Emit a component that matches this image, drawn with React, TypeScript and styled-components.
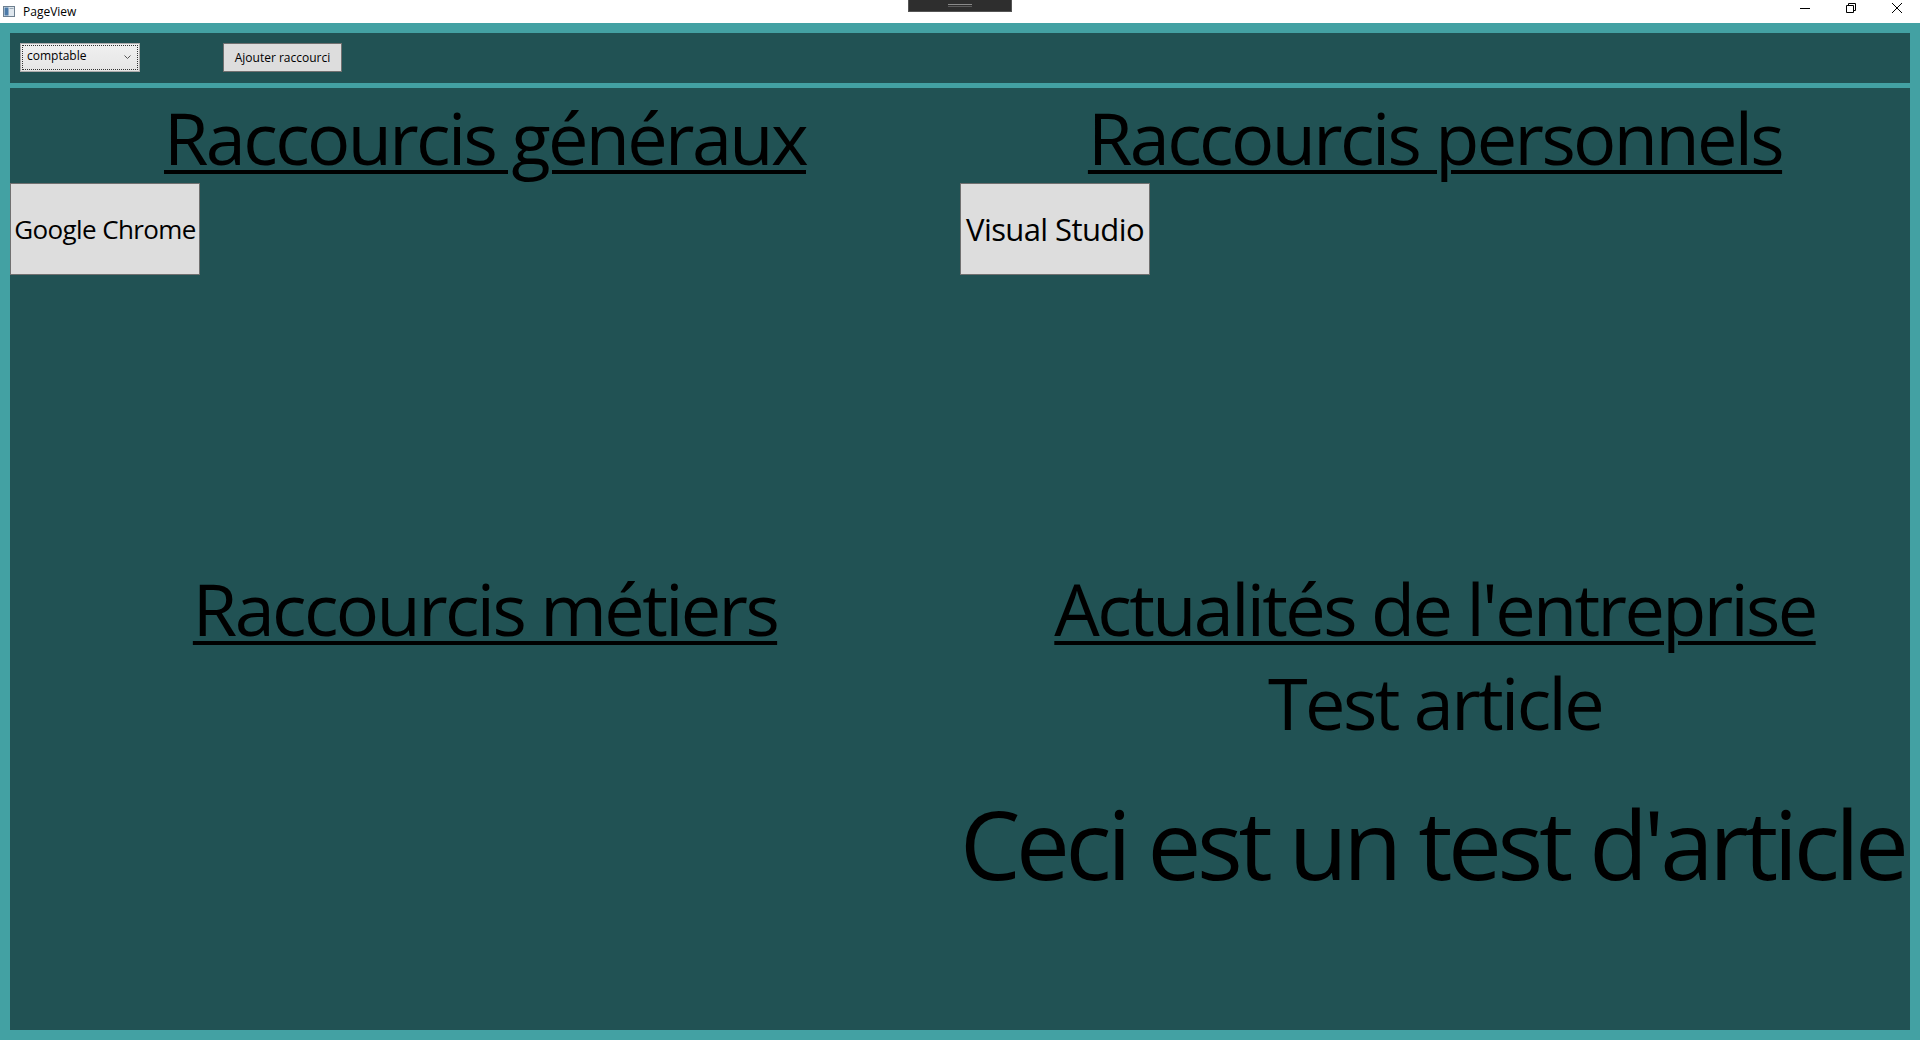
import React, { FC, ReactNode } from "react";
import styled, { createGlobalStyle } from "styled-components";

const colors = {
    frame: "#43a1a3",
    panel: "#215254",
    control: "#dddddd",
    controlBorder: "#707070",
    text: "#000000",
};

const font = `"Open Sans", "Noto Sans", "Liberation Sans", sans-serif`;

const GlobalStyle = createGlobalStyle`
	html, body {
		margin: 0;
		padding: 0;
		background: #ffffff;
	}
	body {
		font-family: ${font};
		overflow: hidden;
	}
`;

const Window = styled.div`
	width: 1920px;
	height: 1040px;
	display: flex;
	flex-direction: column;
`;

const TitleBar = styled.div`
	position: relative;
	height: 23px;
	flex: none;
	display: flex;
	align-items: center;
	background: #ffffff;
	padding-left: 3px;
	font-size: 12px;
	color: #000;
`;

const TitleText = styled.span`
	margin-left: 8px;
	margin-top: -1px;
`;

const Caption = styled.div`
	margin-left: auto;
	display: flex;
	height: 100%;
`;

const CaptionButton = styled.div`
	width: 46px;
	height: 100%;
	display: flex;
	align-items: center;
	justify-content: center;
	margin-top: -4px;
`;

/* petite poignée au centre de la barre de titre */
const Grip = styled.div`
	position: absolute;
	left: 908px;
	top: 0;
	width: 102px;
	height: 11px;
	background: #2e2e2e;
	border: 1px solid #555;
	border-top: none;
	display: flex;
	align-items: center;
	justify-content: center;

	&::after {
		content: "";
		width: 24px;
		height: 1px;
		border-top: 1px solid #8a8a8a;
		border-bottom: 1px solid #5a5a5a;
	}
`;

const Frame = styled.div`
	flex: 1;
	background: ${colors.frame};
	padding: 10px;
	display: flex;
	flex-direction: column;
	gap: 5px;
`;

const Toolbar = styled.div`
	height: 50px;
	flex: none;
	background: ${colors.panel};
	display: flex;
	align-items: flex-start;
	padding: 10px;
	box-sizing: border-box;
	gap: 83px;
`;

const Combo = styled.div`
	width: 120px;
	height: 29px;
	box-sizing: border-box;
	border: 1px solid #acacac;
	background: linear-gradient(#f0f0f0, #e5e5e5);
	padding: 1px;
`;

const ComboInner = styled.div`
	height: 100%;
	box-sizing: border-box;
	border: 1px dotted #333;
	display: flex;
	align-items: flex-start;
	justify-content: space-between;
	padding: 1px 6px 0 4px;
	font-size: 12px;
	color: #000;
`;

const Chevron = styled.span`
	margin-top: 8px;
	display: flex;
`;

const SmallButton = styled.button`
	width: 119px;
	height: 29px;
	margin: 0;
	padding: 0;
	background: ${colors.control};
	border: 1px solid ${colors.controlBorder};
	font-family: ${font};
	font-size: 12px;
	color: #000;
`;

const Board = styled.div`
	flex: 1;
	background: ${colors.panel};
	display: grid;
	grid-template-columns: 1fr 1fr;
	grid-template-rows: 1fr 1fr;
	overflow: hidden;
`;

const Section = styled.section`
	display: flex;
	flex-direction: column;
	min-width: 0;
	overflow: hidden;
`;

const Heading = styled.h2`
	margin: 0 0 -3px;
	font-size: 72px;
	font-weight: 400;
	line-height: 98px;
	flex: none;
	text-align: center;
	white-space: nowrap;
	color: ${colors.text};
	text-decoration: underline;
	text-decoration-thickness: 4px;
	text-underline-offset: 5px;
	letter-spacing: -2.6px;
`;

const Shortcuts = styled.div`
	display: flex;
	flex-wrap: wrap;
`;

const Shortcut = styled.button<{ $size: number }>`
	width: 190px;
	height: 92px;
	margin: 0;
	padding: 0;
	background: ${colors.control};
	border: 1px solid ${colors.controlBorder};
	font-family: ${font};
	font-size: ${(props) => props.$size}px;
	letter-spacing: -0.6px;
	color: #000;
	white-space: nowrap;
`;

const ArticleTitle = styled.div`
	font-size: 72px;
	line-height: 98px;
	margin: -1px 0;
	text-align: center;
	white-space: nowrap;
	letter-spacing: -2.6px;
	color: ${colors.text};
`;

const ArticleBody = styled.div`
	margin-top: 27px;
	font-size: 96px;
	line-height: 131px;
	margin-bottom: -3px;
	white-space: nowrap;
	letter-spacing: -4.4px;
	color: ${colors.text};
`;

const AppIcon: FC = () => (
    <svg width="12" height="11" viewBox="0 0 12 11">
        <rect x="0.5" y="0.5" width="11" height="10" fill="#dfe7ee" stroke="#6d7f8f" />
        <rect x="1.5" y="1.5" width="4" height="8" fill="#4c7aa8" />
        <rect x="6.5" y="2" width="4" height="1" fill="#9aa9b6" />
    </svg>
);

const Block: FC<{ title: string; children?: ReactNode }> = ({ title, children }) => (
    <Section>
        <Heading>{title}</Heading>
        {children}
    </Section>
);

const App: FC = () => {
    return (
        <Window>
            <GlobalStyle />
            <TitleBar>
                <AppIcon />
                <TitleText>PageView</TitleText>
                <Grip />
                <Caption>
                    <CaptionButton>
                        <svg width="10" height="10" viewBox="0 0 10 10">
                            <path d="M0 5.5h10" stroke="#000" strokeWidth="1" />
                        </svg>
                    </CaptionButton>
                    <CaptionButton>
                        <svg width="10" height="10" viewBox="0 0 10 10">
                            <path d="M0.5 2.5h7v7h-7z M2.5 2.5v-2h7v7h-2" stroke="#000" strokeWidth="1" fill="none" />
                        </svg>
                    </CaptionButton>
                    <CaptionButton>
                        <svg width="10" height="10" viewBox="0 0 10 10">
                            <path d="M0 0L10 10M10 0L0 10" stroke="#000" strokeWidth="1" />
                        </svg>
                    </CaptionButton>
                </Caption>
            </TitleBar>
            <Frame>
                <Toolbar>
                    <Combo>
                        <ComboInner>
                            <span>comptable</span>
                            <Chevron>
                                <svg width="7" height="4" viewBox="0 0 7 4">
                                    <path d="M0.5 0.5L3.5 3.5L6.5 0.5" stroke="#555" fill="none" />
                                </svg>
                            </Chevron>
                        </ComboInner>
                    </Combo>
                    <SmallButton>Ajouter raccourci</SmallButton>
                </Toolbar>
                <Board>
                    <Block title="Raccourcis généraux">
                        <Shortcuts>
                            <Shortcut $size={26}>Google Chrome</Shortcut>
                        </Shortcuts>
                    </Block>
                    <Block title="Raccourcis personnels">
                        <Shortcuts>
                            <Shortcut $size={31}>Visual Studio</Shortcut>
                        </Shortcuts>
                    </Block>
                    <Block title="Raccourcis métiers" />
                    <Block title="Actualités de l'entreprise">
                        <ArticleTitle>Test article</ArticleTitle>
                        <ArticleBody>Ceci est un test d'article</ArticleBody>
                    </Block>
                </Board>
            </Frame>
        </Window>
    );
};

export default App;
